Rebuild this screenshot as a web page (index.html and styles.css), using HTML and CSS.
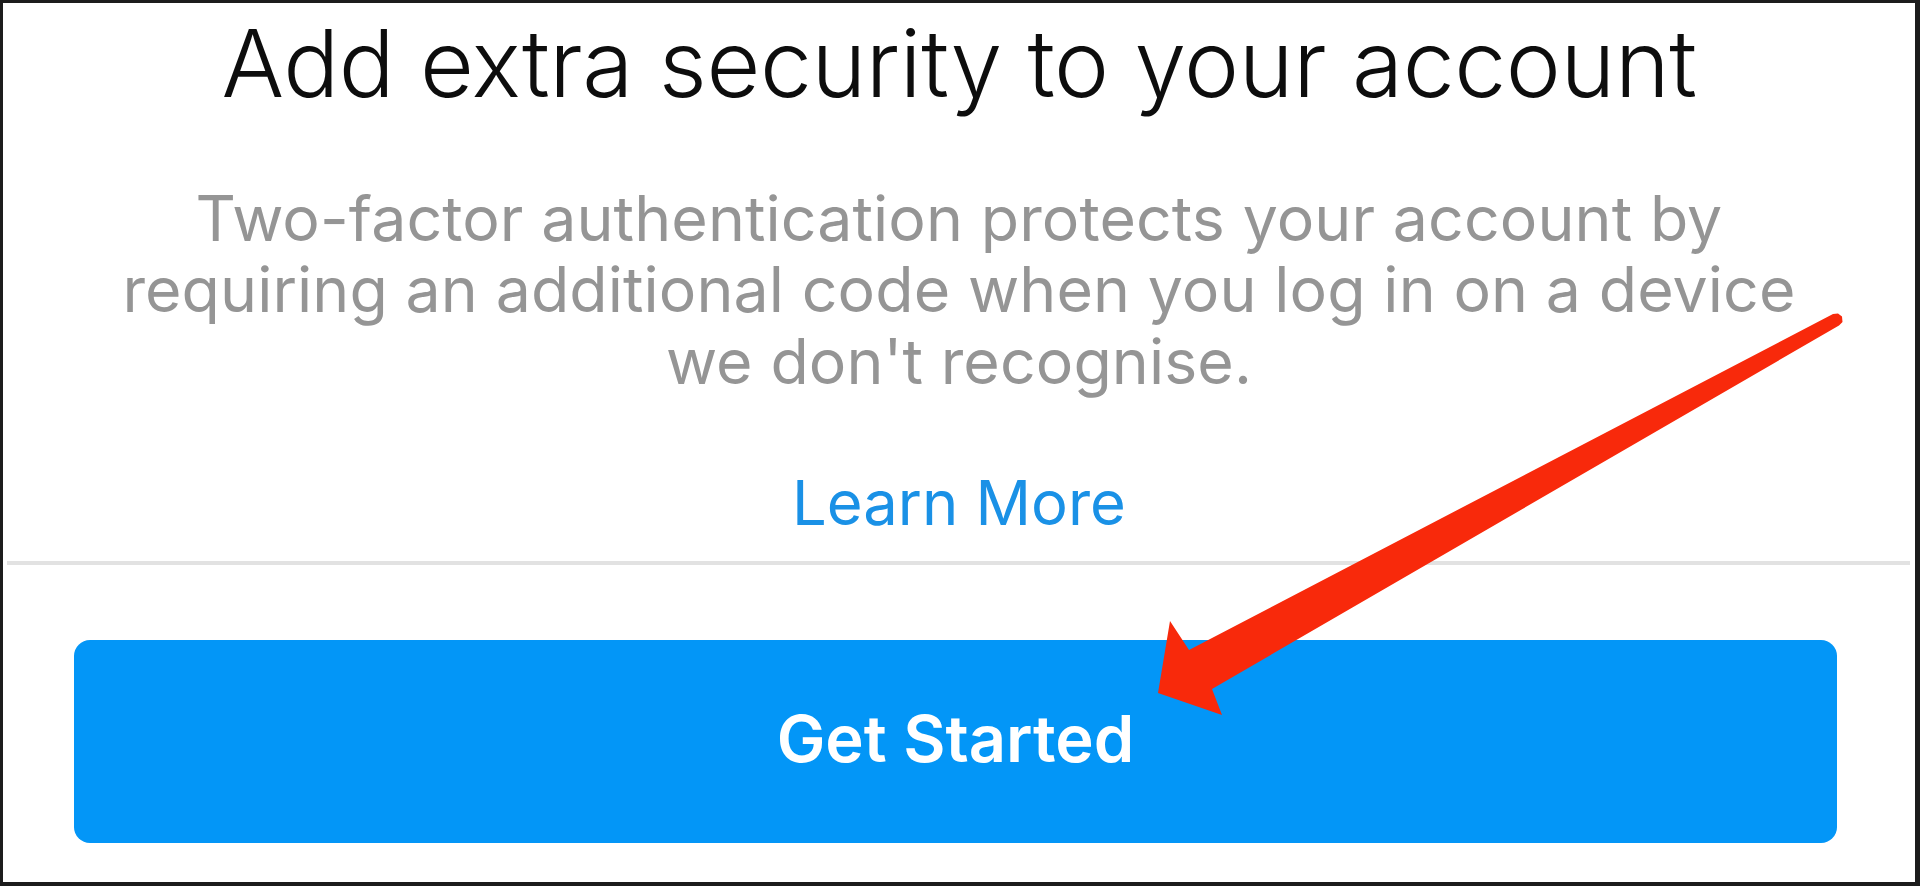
FILE: index.html
```html
<!DOCTYPE html>
<html>
<head>
<meta charset="utf-8">
<link rel="stylesheet" href="styles.css">
</head>
<body>
<div class="frame">
  <h1 class="title">Add extra security to your account</h1>
  <p class="desc">Two-factor authentication protects your account by<br>requiring an additional code when you log in on a device<br>we don't recognise.</p>
  <a class="learn">Learn More</a>
  <div class="divider"></div>
  <div class="actions"><button class="cta">Get Started</button></div>
  <svg class="arrow" width="1920" height="886" viewBox="0 0 1920 886" aria-hidden="true">
    <polygon points="1833,314 1838,313.5 1842,316.5 1842.5,322 1839,325.5 1212,689 1222,715 1158,693 1170,621 1189,650" />
  </svg>
</div>
</body>
</html>
```
FILE: styles.css
```css
html, body { margin: 0; padding: 0; background: #fff; }
.frame {
  position: relative;
  box-sizing: border-box;
  height: 886px;
  border-style: solid;
  border-color: #1c1c1c;
  border-width: 3px 5px 4px 3px;
  display: flex;
  flex-direction: column;
  align-items: center;
  font-family: Inter, "Noto Sans", sans-serif;
}
.title {
  margin: 5px 0 0;
  font-size: 93px;
  font-weight: 300;
  line-height: 110px;
  letter-spacing: -0.4px;
  color: #0d0d0d;
}
.desc {
  margin: 64.5px 0 0;
  font-size: 62.6px;
  line-height: 71.5px;
  letter-spacing: 0.1px;
  color: #959595;
  text-align: center;
}
.learn {
  margin-top: 70px;
  font-size: 61.5px;
  line-height: 72px;
  color: #1a91e6;
}
.divider {
  align-self: stretch;
  margin: 22px 5px 0 4px;
  height: 4px;
  background: #e2e2e2;
}
.actions {
  align-self: stretch;
  padding: 75px 78px 0 71px;
}
.cta {
  display: block;
  width: 100%;
  height: 203px;
  padding: 0 0 6px;
  border: 0;
  border-radius: 16px;
  background: #0396f7;
  color: #fff;
  font-family: Inter, "Noto Sans", sans-serif;
  font-weight: 600;
  font-size: 65px;
}
.arrow {
  position: absolute;
  left: -3px;
  top: -3px;
  pointer-events: none;
}
.arrow polygon { fill: #f8290b; }
```
